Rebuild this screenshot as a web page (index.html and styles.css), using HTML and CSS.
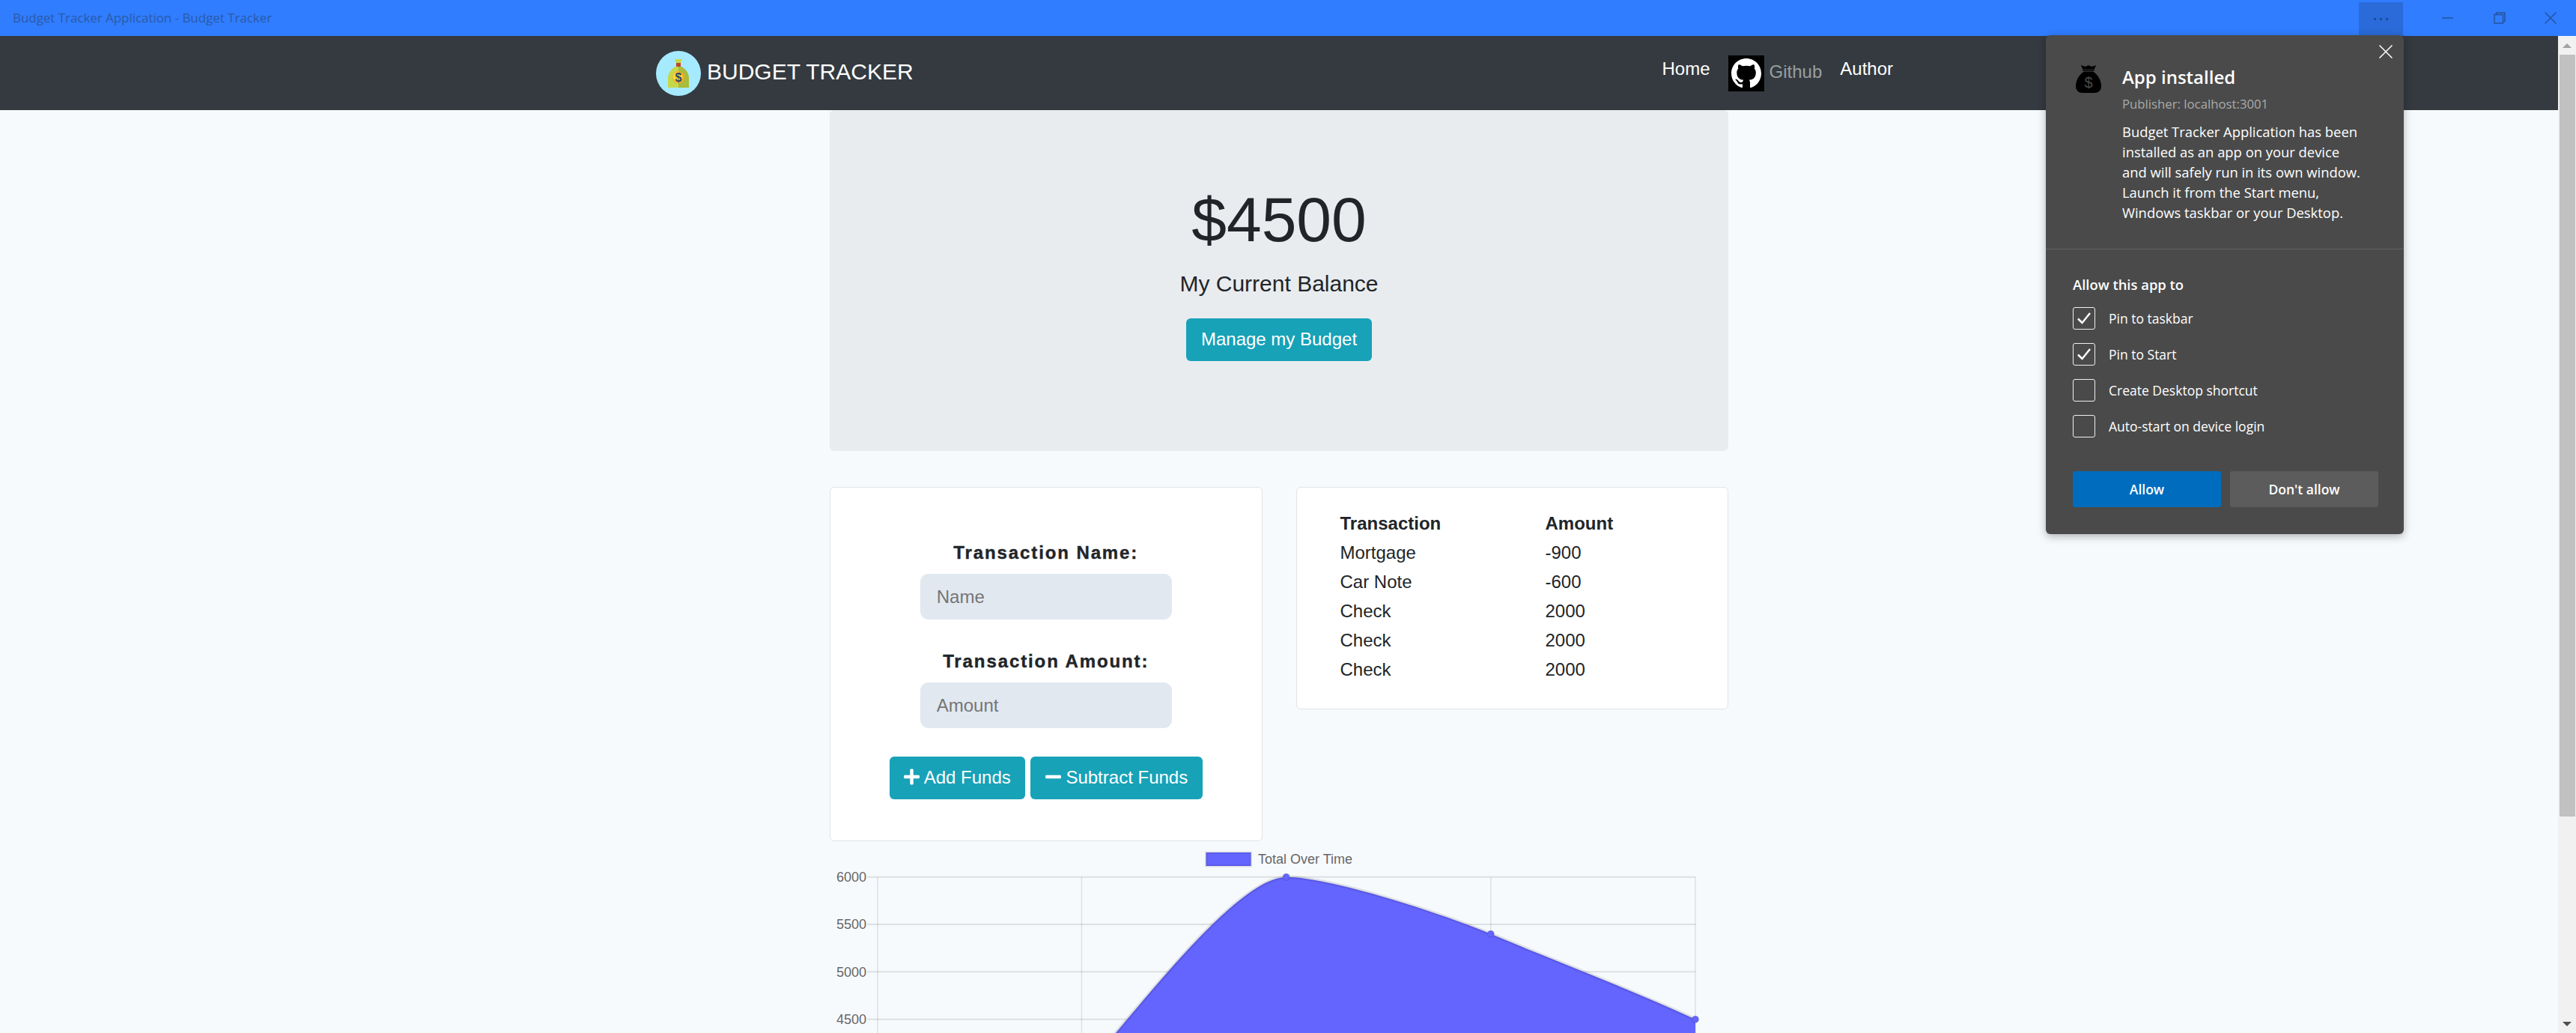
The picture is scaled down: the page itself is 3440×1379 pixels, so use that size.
FILE: index.html
```html
<!DOCTYPE html>
<html lang="en">

<head>
    <meta charset="UTF-8">
    <meta name="viewport" content="width=device-width, initial-scale=1.0">
    <title>Budget Tracker</title>
    <link rel="stylesheet" href="styles.css">
</head>

<body>
    <div class="window">
        <!-- app window title bar -->
        <div class="titlebar">
            <span class="titlebar-text">Budget Tracker Application - Budget Tracker</span>
            <div class="more-btn"><i></i><i></i><i></i></div>
            <div class="win-btn">
                <svg width="16" height="16" viewBox="0 0 16 16"><path d="M0 8H15" class="win-stroke" /></svg>
            </div>
            <div class="win-btn">
                <svg width="16" height="16" viewBox="0 0 16 16"><path d="M3.5 3V1H15V12.500H13M1 3.500H12.500V15H1Z" class="win-stroke" /></svg>
            </div>
            <div class="win-btn win-close">
                <svg width="16" height="16" viewBox="0 0 16 16"><path d="M0.500 0.500L15.500 15.500M15.500 0.500L0.500 15.500" class="win-stroke" /></svg>
            </div>
        </div>

        <div class="viewport">
            <div class="page">
                <nav class="navbar">
                    <a class="brand" href="#">
                        <svg class="brand-logo" width="60" height="60" viewBox="0 0 60 60">
                            <circle cx="30" cy="30" r="30" fill="#a6eaff" />
                            <path d="M25.500 11H34.500L33 16H27Z" fill="#c5d84a" />
                            <rect x="27" y="16" width="6" height="5" fill="#c0452b" />
                            <path d="M30 21H26C20 24 16 30 16 36V49H30Z" fill="#c5d84a" />
                            <path d="M30 21H34C40 24 44 30 44 36V49H30Z" fill="#a9bc3b" />
                            <circle cx="30" cy="35" r="8" fill="#f9a825" />
                            <circle cx="29" cy="34.500" r="6.500" fill="#fdd835" />
                            <text x="30" y="40.500" class="brand-dollar">$</text>
                        </svg>
                        <span class="brand-name">BUDGET TRACKER</span>
                    </a>
                    <div class="nav-links">
                        <a class="nav-link" href="#">Home</a>
                        <a class="nav-link nav-github" href="#">
                            <span class="github-box">
                                <svg width="40" height="40" viewBox="0 0 16 16">
                                    <path fill="#fff" d="M8 0C3.580 0 0 3.580 0 8c0 3.540 2.290 6.530 5.470 7.590.4.070.55-.17.55-.38 0-.19-.01-.82-.01-1.490-2.010.37-2.530-.49-2.690-.94-.09-.23-.48-.94-.82-1.130-.28-.15-.68-.52-.01-.53.63-.01 1.080.58 1.230.82.72 1.210 1.870.87 2.330.66.070-.52.28-.87.51-1.070-1.780-.2-3.640-.89-3.640-3.950 0-.87.31-1.590.82-2.150-.08-.2-.36-1.020.08-2.120 0 0 .67-.21 2.200.82.64-.18 1.320-.27 2-.27.68 0 1.360.09 2 .27 1.530-1.040 2.200-.82 2.200-.82.44 1.100.16 1.920.08 2.120.51.56.82 1.270.82 2.150 0 3.070-1.870 3.750-3.650 3.950.29.25.54.73.54 1.480 0 1.070-.01 1.930-.01 2.200 0 .21.15.46.55.38A8.013 8.013 0 0016 8c0-4.420-3.580-8-8-8z" />
                                </svg>
                            </span>
                            <span class="github-text">Github</span>
                        </a>
                        <a class="nav-link" href="#">Author</a>
                    </div>
                </nav>

                <div class="container">
                    <div class="hero">
                        <h1 class="balance">$4500</h1>
                        <p class="lead">My Current Balance</p>
                        <button class="btn">Manage my Budget</button>
                    </div>

                    <div class="cards">
                        <div class="card form-card">
                            <div class="form-group">
                                <label class="form-label" for="t-name">Transaction Name:</label>
                                <input class="form-input" id="t-name" type="text" placeholder="Name">
                            </div>
                            <div class="form-group">
                                <label class="form-label" for="t-amount">Transaction Amount:</label>
                                <input class="form-input" id="t-amount" type="text" placeholder="Amount">
                            </div>
                            <div class="form-actions">
                                <button class="btn">
                                    <svg class="btn-icon" viewBox="0 0 448 512"><path d="M416 208H272V64c0-17.670-14.330-32-32-32h-32c-17.670 0-32 14.330-32 32v144H32c-17.670 0-32 14.330-32 32v32c0 17.670 14.330 32 32 32h144v144c0 17.670 14.330 32 32 32h32c17.670 0 32-14.330 32-32V304h144c17.670 0 32-14.330 32-32v-32c0-17.670-14.330-32-32-32z" /></svg>
                                    Add Funds
                                </button>
                                <button class="btn">
                                    <svg class="btn-icon" viewBox="0 0 448 512"><path d="M416 208H32c-17.670 0-32 14.330-32 32v32c0 17.670 14.330 32 32 32h384c17.670 0 32-14.330 32-32v-32c0-17.670-14.330-32-32-32z" /></svg>
                                    Subtract Funds
                                </button>
                            </div>
                        </div>

                        <div class="card table-card">
                            <table class="tx-table">
                                <thead>
                                    <tr>
                                        <th>Transaction</th>
                                        <th>Amount</th>
                                    </tr>
                                </thead>
                                <tbody>
                                    <tr><td>Mortgage</td><td>-900</td></tr>
                                    <tr><td>Car Note</td><td>-600</td></tr>
                                    <tr><td>Check</td><td>2000</td></tr>
                                    <tr><td>Check</td><td>2000</td></tr>
                                    <tr><td>Check</td><td>2000</td></tr>
                                </tbody>
                            </table>
                        </div>
                    </div>

                    <!-- chart, coordinates are page pixels through the viewBox -->
                    <svg class="chart" width="1200" height="340" viewBox="1108 1123 1200 340">
                        <rect class="legend-box" x="1610.500" y="1138" width="60" height="18" />
                        <text class="legend-text" x="1680" y="1153">Total Over Time</text>

                        <path class="grid" d="M1172 1170.700V1463M1444.400 1170.700V1463M1717.600 1170.700V1463M1990.800 1170.700V1463M2264 1170.700V1463" />
                        <path class="grid grid-h" d="M1158 1170.700H2264M1158 1234H2264M1158 1297.300H2264M1158 1360.700H2264" />

                        <text class="tick" x="1157" y="1177">6000</text>
                        <text class="tick" x="1157" y="1240">5500</text>
                        <text class="tick" x="1157" y="1304">5000</text>
                        <text class="tick" x="1157" y="1367">4500</text>

                        <path class="area" d="M1444 1440L1490 1379C1575 1277 1665 1172 1717.600 1170.700C1775 1170.700 1921 1217.600 1990.800 1246.700C2075 1282 2175 1320 2264 1360.700V1463H1444Z" />
                        <path class="area-edge" d="M1444 1440L1490 1379C1575 1277 1665 1172 1717.600 1170.700C1775 1170.700 1921 1217.600 1990.800 1246.700C2075 1282 2175 1320 2264 1360.700" />
                        <circle class="point" cx="1717.600" cy="1170.700" r="4.500" />
                        <circle class="point" cx="1990.800" cy="1246.700" r="4.500" />
                        <circle class="point" cx="2264" cy="1360.700" r="4.500" />
                    </svg>
                </div>
            </div>

            <div class="scrollbar">
                <div class="scroll-arrow"><span class="arrow-up"></span></div>
                <div class="scroll-thumb"></div>
                <div class="scroll-rest"></div>
                <div class="scroll-arrow"><span class="arrow-down"></span></div>
            </div>
        </div>

        <!-- install dialog -->
        <div class="install-popup">
            <svg class="popup-close" width="18" height="18" viewBox="0 0 18 18"><path d="M0.500 0.500L17.500 17.500M17.500 0.500L0.500 17.500" /></svg>
            <div class="popup-head">
                <svg class="popup-icon" width="34" height="37" viewBox="0 0 34 37">
                    <path d="M7 0L13 2L17 0L21 2L27 0L25 5H9Z" />
                    <rect x="9" y="5.500" width="16" height="2" rx="1" />
                    <path d="M11 8.500H23C29 12 34 20 34 28C34 34 30 37 25 37H9C4 37 0 34 0 28C0 20 5 12 11 8.500Z" />
                    <text x="17" y="30" class="popup-dollar">$</text>
                </svg>
                <div class="popup-info">
                    <div class="popup-title">App installed</div>
                    <div class="popup-publisher">Publisher: localhost:3001</div>
                    <p class="popup-desc">Budget Tracker Application has been<br>installed as an app on your device<br>and will safely run in its own window.<br>Launch it from the Start menu,<br>Windows taskbar or your Desktop.</p>
                </div>
            </div>
            <div class="popup-body">
                <div class="popup-subtitle">Allow this app to</div>
                <div class="check-row">
                    <span class="check-box"><svg width="20" height="18" viewBox="0 0 20 18"><path d="M2 9.500L7.500 15L18 2" /></svg></span>
                    <span class="check-label">Pin to taskbar</span>
                </div>
                <div class="check-row">
                    <span class="check-box"><svg width="20" height="18" viewBox="0 0 20 18"><path d="M2 9.500L7.500 15L18 2" /></svg></span>
                    <span class="check-label">Pin to Start</span>
                </div>
                <div class="check-row">
                    <span class="check-box"></span>
                    <span class="check-label">Create Desktop shortcut</span>
                </div>
                <div class="check-row">
                    <span class="check-box"></span>
                    <span class="check-label">Auto-start on device login</span>
                </div>
                <div class="popup-actions">
                    <button class="popup-btn popup-allow">Allow</button>
                    <button class="popup-btn popup-deny">Don't allow</button>
                </div>
            </div>
        </div>
    </div>
</body>

</html>
```

FILE: styles.css
```css
* {
    box-sizing: border-box;
}

html,
body {
    margin: 0;
    height: 100%;
    overflow: hidden;
}

body {
    font-family: "Liberation Sans", Arial, sans-serif;
    font-size: 24px;
    line-height: 36px;
    color: #212529;
    background-color: #f7fafd;
}

a {
    text-decoration: none;
}

.window {
    position: relative;
    display: flex;
    flex-direction: column;
    height: 100vh;
}

/* title bar */
.titlebar {
    display: flex;
    align-items: center;
    flex: 0 0 48px;
    height: 48px;
    background-color: #307dff;
}

.titlebar-text {
    margin-left: 17px;
    margin-right: auto;
    font-family: "Open Sans", sans-serif;
    font-size: 17px;
    letter-spacing: -0.05px;
    color: #2a5aa8;
}

.more-btn {
    display: flex;
    align-items: center;
    justify-content: center;
    gap: 5px;
    width: 59px;
    height: 45px;
    margin-top: 3px;
    margin-right: 25px;
    background-color: #2a6bd9;
}

.more-btn i {
    width: 3px;
    height: 3px;
    background-color: #1d4a96;
}

.win-btn {
    display: flex;
    align-items: center;
    justify-content: center;
    width: 69px;
    height: 48px;
}

.win-close {
    width: 68px;
}

.win-stroke {
    fill: none;
    stroke: #22549f;
    stroke-width: 1.5;
}

.viewport {
    display: flex;
    flex: 1;
    min-height: 0;
}

.page {
    flex: 1;
    min-width: 0;
    overflow: hidden;
}

/* navbar */
.navbar {
    display: flex;
    align-items: center;
    justify-content: space-between;
    height: 99px;
    padding: 0 876px;
    background-color: #343a40;
}

.brand {
    display: flex;
    align-items: center;
    gap: 8px;
}

.brand-logo {
    display: block;
}

.brand-dollar {
    font-family: "Liberation Sans", sans-serif;
    font-size: 16px;
    font-weight: bold;
    text-anchor: middle;
    fill: #2c4a63;
}

.brand-name {
    font-size: 30px;
    line-height: 45px;
    color: #fff;
    margin-bottom: 4px;
}

.nav-links {
    display: flex;
    align-items: flex-start;
    align-self: flex-start;
    padding-top: 26px;
}

.nav-link {
    padding: 0 12px;
    color: #fff;
}

.nav-github {
    display: flex;
    align-items: center;
    gap: 7px;
}

.github-box {
    display: flex;
    align-items: center;
    justify-content: center;
    width: 48px;
    height: 48px;
    background-color: #000;
}

.github-text {
    padding-bottom: 4px;
    color: rgba(255, 255, 255, 0.5);
}

/* main column */
.container {
    width: 1200px;
    margin: 0 auto;
}

.hero {
    padding: 96px 48px 120px;
    margin-bottom: 48px;
    text-align: center;
    background-color: #e9ecef;
    border-radius: 6px;
}

.balance {
    margin: 0 0 12px;
    font-size: 84px;
    font-weight: 300;
    line-height: 1.2;
}

.lead {
    margin: 0 0 24px;
    font-size: 30px;
    line-height: 45px;
}

.btn {
    height: 57px;
    padding: 0 19.5px;
    font-family: inherit;
    font-size: 24px;
    color: #fff;
    background-color: #17a2b8;
    border: none;
    border-radius: 6px;
}

.btn-icon {
    width: 21px;
    height: 24px;
    margin-right: 0;
    vertical-align: -3px;
    fill: #fff;
}

.cards {
    display: flex;
    align-items: flex-start;
    gap: 45px;
}

.card {
    flex: 0 0 577.500px;
    background-color: #fff;
    border: 1.5px solid #e0e3e7;
    border-radius: 6px;
}

.form-card {
    height: 473px;
    padding-top: 69px;
    text-align: center;
}

.form-group {
    margin-bottom: 37.500px;
}

.form-label {
    display: block;
    margin-bottom: 10.500px;
    font-weight: bold;
    letter-spacing: 1.9px;
    -webkit-text-stroke: 0.4px #212529;
}

.form-input {
    display: block;
    width: 336px;
    height: 61px;
    margin: 0 auto;
    padding: 0 22px;
    font-family: inherit;
    font-size: 24px;
    background-color: #e2e8f0;
    border: none;
    border-radius: 11px;
}

.form-actions {
    display: flex;
    justify-content: center;
    gap: 7px;
}

.table-card {
    height: 297px;
    padding: 29px 0 0 58px;
}

.tx-table {
    border-collapse: collapse;
}

.tx-table th,
.tx-table td {
    padding: 1.500px 0;
    text-align: left;
}

.tx-table th:first-child,
.tx-table td:first-child {
    width: 274px;
}

/* chart */
.chart {
    display: block;
}

.legend-box {
    fill: #6464ff;
    stroke: rgba(0, 0, 0, 0.1);
    stroke-width: 3;
}

.legend-text {
    font-size: 18px;
    fill: #666;
}

.tick {
    font-size: 18px;
    fill: #666;
    text-anchor: end;
}

.grid {
    fill: none;
    stroke: rgba(0, 0, 0, 0.1);
    stroke-width: 1.500;
}

.grid-h {
    stroke-width: 2;
}

.area {
    fill: #6464ff;
}

.area-edge {
    fill: none;
    stroke: rgba(0, 0, 0, 0.1);
    stroke-width: 4.500;
}

.point {
    fill: #6464ff;
    stroke: rgba(0, 0, 0, 0.1);
    stroke-width: 1.500;
}

/* fake page scrollbar */
.scrollbar {
    display: flex;
    flex-direction: column;
    flex: 0 0 24px;
    background-color: #f1f1f1;
}

.scroll-arrow {
    display: flex;
    align-items: center;
    justify-content: center;
    flex: 0 0 25px;
}

.arrow-up {
    border-left: 6px solid transparent;
    border-right: 6px solid transparent;
    border-bottom: 6px solid #a3a3a3;
}

.arrow-down {
    border-left: 6px solid transparent;
    border-right: 6px solid transparent;
    border-top: 6px solid #505050;
}

.scroll-thumb {
    flex: 0 0 1017px;
    margin: 0 1px 0 2px;
    background-color: #c1c1c1;
}

.scroll-rest {
    flex: 1;
}

/* install popup */
.install-popup {
    position: absolute;
    top: 47px;
    left: 2732px;
    width: 478px;
    height: 666px;
    font-family: "Open Sans", sans-serif;
    font-size: 18.400px;
    line-height: 27px;
    color: #fff;
    background-color: #4a4a4a;
    border-radius: 6px;
    box-shadow: 0 3px 12px rgba(0, 0, 0, 0.3);
}

.popup-close {
    position: absolute;
    top: 13px;
    right: 15px;
    fill: none;
    stroke: #fff;
    stroke-width: 1.500;
}

.popup-head {
    display: flex;
    gap: 28px;
    padding: 40px 36px 35px 40px;
    border-bottom: 1.500px solid #636363;
}

.popup-icon {
    flex: none;
    fill: #000;
}

.popup-dollar {
    font-family: "Liberation Sans", sans-serif;
    font-size: 20px;
    text-anchor: middle;
    fill: #4a4a4a;
}

.popup-info {
    flex: 1;
    white-space: nowrap;
}

.popup-title {
    font-size: 24px;
    font-weight: 600;
    line-height: 32px;
}

.popup-publisher {
    margin-top: 6px;
    font-size: 16.750px;
    color: #aaa;
}

.popup-desc {
    margin: 9.500px 0 0;
}

.popup-body {
    padding: 33px 34px 0 36px;
}

.popup-subtitle {
    margin-bottom: 17px;
    font-weight: 600;
}

.check-row {
    display: flex;
    align-items: center;
    gap: 18px;
    height: 30px;
    margin-bottom: 18px;
    font-size: 17.500px;
}

.check-label {
    padding-top: 2px;
}

.check-box {
    display: flex;
    align-items: center;
    justify-content: center;
    flex: 0 0 30px;
    height: 30px;
    border: 1.500px solid #f0f0f0;
    border-radius: 3px;
}

.check-box path {
    fill: none;
    stroke: #fff;
    stroke-width: 2.500;
}

.popup-actions {
    display: flex;
    gap: 12px;
    margin-top: 45px;
}

.popup-btn {
    flex: 1;
    height: 48px;
    font-family: inherit;
    font-size: 17.500px;
    font-weight: 600;
    color: #fff;
    border: none;
    border-radius: 3px;
}

.popup-allow {
    background-color: #006cbe;
}

.popup-deny {
    background-color: #5c5c5c;
}
```
